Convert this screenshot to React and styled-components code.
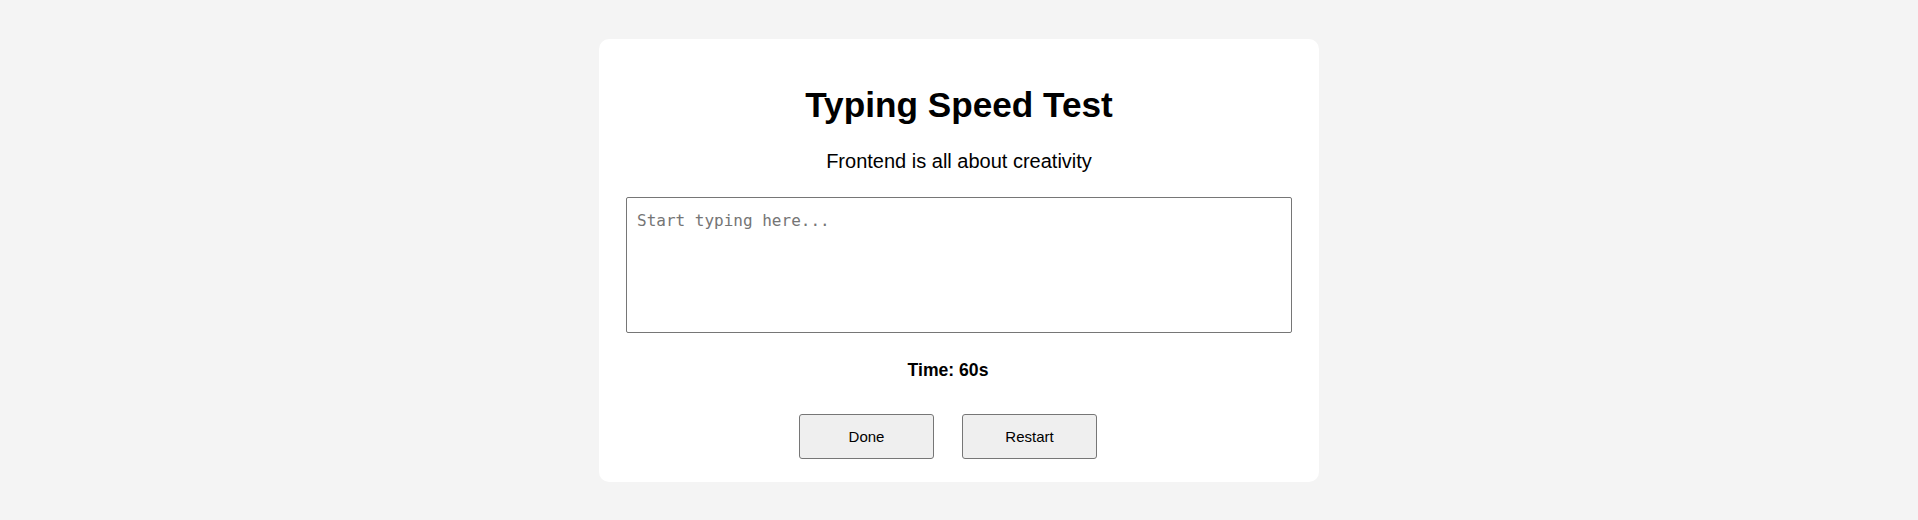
import React, { useState } from "react";
import styled, { createGlobalStyle } from "styled-components";

const GlobalStyle = createGlobalStyle`
  body {
    margin: 0;
    background-color: #f4f4f4;
    font-family: "Liberation Sans", Arial, sans-serif;
  }
`;

const Page = styled.div`
  min-height: 100vh;
  display: flex;
  justify-content: center;
  align-items: center;
`;

const Card = styled.div`
  width: 720px;
  box-sizing: border-box;
  padding: 46px 27px 23px 27px;
  background-color: #fff;
  border-radius: 10px;
  display: flex;
  flex-direction: column;
  align-items: center;
  text-align: center;
`;

const Title = styled.h1`
  margin: 0;
  font-size: 35.2px;
  line-height: 40px;
  font-weight: bold;
  color: #000;
`;

const Quote = styled.p`
  margin: 25px 0 0;
  font-size: 20px;
  line-height: 23px;
  color: #000;
`;

const TypingArea = styled.textarea`
  margin-top: 24px;
  width: 100%;
  height: 136px;
  box-sizing: border-box;
  padding: 12px 10px 10px;
  border: 1px solid #767676;
  border-radius: 2px;
  font-family: "DejaVu Sans Mono", "Liberation Mono", monospace;
  font-size: 16px;
  line-height: 22px;
  resize: none;
  outline: none;

  &::placeholder {
    color: #757575;
  }
`;

// the timer and buttons sit a little left of centre, as in the original
const Timer = styled.p`
  margin: 27px 22px 0 0;
  font-size: 17.6px;
  line-height: 20px;
  font-weight: bold;
`;

const ButtonRow = styled.div`
  margin-top: 34px;
  display: flex;
  justify-content: center;
  gap: 6px;
`;

const ActionButton = styled.button`
  width: 135px;
  height: 45px;
  margin-right: 22px;
  background-color: #efefef;
  border: 1px solid #767676;
  border-radius: 3px;
  font-family: "Liberation Sans", Arial, sans-serif;
  font-size: 15px;
  color: #000;
  cursor: pointer;

  &:hover {
    background-color: #e5e5e5;
  }
`;

const App = () => {
  const [text, setText] = useState("");
  const [time] = useState(60);

  return (
    <>
      <GlobalStyle />
      <Page>
        <Card>
          <Title>Typing Speed Test</Title>
          <Quote>Frontend is all about creativity</Quote>
          <TypingArea
            placeholder="Start typing here..."
            value={text}
            onChange={(e) => setText(e.target.value)}
          />
          <Timer>Time: {time}s</Timer>
          <ButtonRow>
            <ActionButton>Done</ActionButton>
            <ActionButton onClick={() => setText("")}>Restart</ActionButton>
          </ButtonRow>
        </Card>
      </Page>
    </>
  );
};

export default App;
